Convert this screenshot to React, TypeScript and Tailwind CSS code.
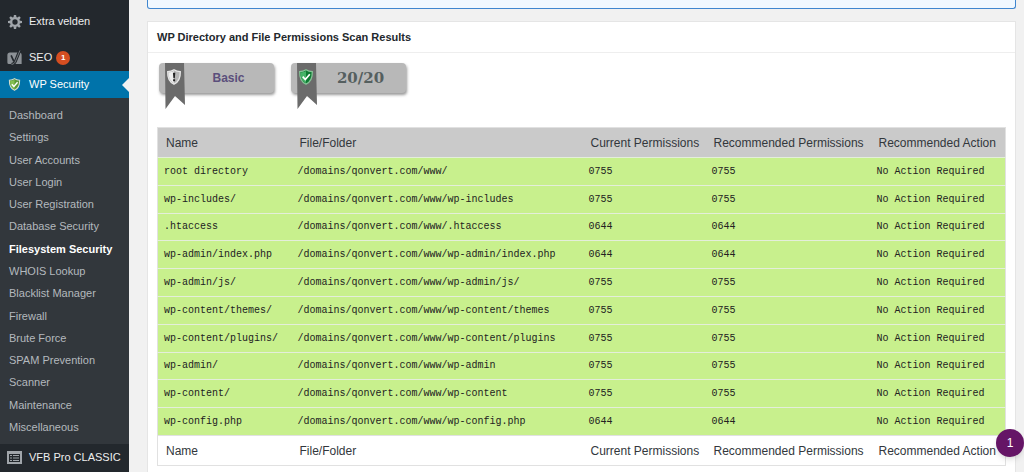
import type { ReactNode } from "react";
import clsx from "clsx";

const SUBMENU = [
  "Dashboard",
  "Settings",
  "User Accounts",
  "User Login",
  "User Registration",
  "Database Security",
  "Filesystem Security",
  "WHOIS Lookup",
  "Blacklist Manager",
  "Firewall",
  "Brute Force",
  "SPAM Prevention",
  "Scanner",
  "Maintenance",
  "Miscellaneous",
];

const COLUMNS = [
  "Name",
  "File/Folder",
  "Current Permissions",
  "Recommended Permissions",
  "Recommended Action",
];

const ROWS = [
  { name: "root directory", path: "/domains/qonvert.com/www/", perms: "0755" },
  { name: "wp-includes/", path: "/domains/qonvert.com/www/wp-includes", perms: "0755" },
  { name: ".htaccess", path: "/domains/qonvert.com/www/.htaccess", perms: "0644" },
  { name: "wp-admin/index.php", path: "/domains/qonvert.com/www/wp-admin/index.php", perms: "0644" },
  { name: "wp-admin/js/", path: "/domains/qonvert.com/www/wp-admin/js/", perms: "0755" },
  { name: "wp-content/themes/", path: "/domains/qonvert.com/www/wp-content/themes", perms: "0755" },
  { name: "wp-content/plugins/", path: "/domains/qonvert.com/www/wp-content/plugins", perms: "0755" },
  { name: "wp-admin/", path: "/domains/qonvert.com/www/wp-admin", perms: "0755" },
  { name: "wp-content/", path: "/domains/qonvert.com/www/wp-content", perms: "0755" },
  { name: "wp-config.php", path: "/domains/qonvert.com/www/wp-config.php", perms: "0644" },
];

const TEETH = [0, 45, 90, 135, 180, 225, 270, 315];

function GearIcon() {
  return (
    <svg width="14" height="14" viewBox="0 0 20 20" aria-hidden="true">
      <circle cx="10" cy="10" r="5.5" fill="none" stroke="#a0a5aa" strokeWidth="3.4" />
      {TEETH.map((angle) => (
        <path key={angle} d="M8.400 0h3.200l.6 4H7.800z" fill="#a0a5aa" transform={`rotate(${angle} 10 10)`} />
      ))}
    </svg>
  );
}

function YoastIcon() {
  return (
    <svg width="15" height="16" viewBox="0 0 20 21" aria-hidden="true">
      <path d="M4 3h12.500a3 3 0 0 1 3 3v12.500H2.500a2 2 0 0 1-2-2V6.500A3.500 3.500 0 0 1 4 3z" fill="#8c9196" />
      <path d="M17.200 0L11.400 14.500c-1 2.600-2.300 4.300-5.400 4.600" stroke="#23282d" strokeWidth="4" fill="none" />
      <path d="M5.500 7l3.600 8" stroke="#23282d" strokeWidth="2.200" fill="none" />
      <path d="M17.200 .5L11.400 14.500c-1 2.600-2.300 4.300-5.400 4.600" stroke="#8c9196" strokeWidth="1" fill="none" />
    </svg>
  );
}

function ShieldIcon({ kind, size }: { kind: "menu" | "ok" | "warn"; size: number }) {
  const light = { menu: "#85bf50", ok: "#45b368", warn: "#eeeeee" }[kind];
  const dark = { menu: "#5a9a35", ok: "#0d7a32", warn: "#b5b5b5" }[kind];
  const rim = { menu: "#d3dccd", ok: "#86c296", warn: "#e6e6e6" }[kind];

  return (
    <svg width={size} height={size} viewBox="0 0 16 16" aria-hidden="true">
      <path
        d="M8 .8c2 1.400 4.200 1.900 6.300 1.900.2 5.800-1.400 10.200-6.300 12.500C3.100 12.900 1.500 8.500 1.700 2.700 3.800 2.700 6 2.200 8 .8z"
        fill={dark}
        stroke={rim}
        strokeWidth="1.300"
      />
      <path d="M8 2v12C4.200 12 2.600 8.500 2.600 3.500 4.500 3.400 6.500 3 8 2z" fill={light} />
      {kind === "warn" ? (
        <path d="M6.900 3.800h2.400l-.5 5.400H7.400zM7.100 10.300h2v2h-2z" fill="#222" />
      ) : (
        <path d="M4.700 7.700l2.600 2.800 4.500-5.300" stroke="#fff" strokeWidth="1.700" fill="none" />
      )}
    </svg>
  );
}

function FormIcon() {
  return (
    <svg width="15" height="13" viewBox="0 0 15 13" aria-hidden="true">
      <path d="M0 0h15v13H0z" fill="#a0a5aa" />
      <path d="M2 3h11v8H2z" fill="#23282d" />
      <path d="M3 4h2v1H3zM6 4h6v1H6zM3 6.500h2v1H3zM6 6.500h6v1H6zM3 9h2v1H3zM6 9h6v1H6z" fill="#a0a5aa" />
    </svg>
  );
}

function MenuItem({
  icon,
  active,
  children,
}: {
  icon?: ReactNode;
  active?: boolean;
  children: ReactNode;
}) {
  return (
    <a
      href="#"
      className={clsx(
        "relative flex h-[27px] items-center whitespace-nowrap text-[11px]",
        active ? "bg-[#0073aa] text-white" : "text-[#eeeeee]",
      )}
    >
      <span className="flex w-[29px] shrink-0 justify-center">{icon}</span>
      {children}
      {active && (
        <span className="absolute top-1/2 right-0 -translate-y-1/2 border-y-[7px] border-r-[7px] border-y-transparent border-r-[#f1f1f1]" />
      )}
    </a>
  );
}

function Sidebar() {
  return (
    <nav className="w-[129px] shrink-0 bg-[#23282d]">
      <div className="-mt-[19px]">
        <MenuItem>Instellingen</MenuItem>
        <MenuItem icon={<GearIcon />}>Extra velden</MenuItem>
      </div>
      <div className="mt-[9px]">
        <MenuItem icon={<YoastIcon />}>
          SEO
          <span className="ml-1 flex size-[14px] items-center justify-center rounded-full bg-[#d54e21] text-[8px] font-bold text-white">
            1
          </span>
        </MenuItem>
        <MenuItem icon={<ShieldIcon kind="menu" size={13} />} active>
          WP Security
        </MenuItem>
      </div>
      <ul className="flex h-[346px] flex-col bg-[#32373c] py-[6px]">
        {SUBMENU.map((item) => (
          <li key={item} className="flex flex-1 items-center">
            <a
              href="#"
              className={clsx(
                "px-[9px] text-[11px] leading-4 whitespace-nowrap",
                item === "Filesystem Security" ? "font-bold text-white" : "text-[#b4b9be]",
              )}
            >
              {item}
            </a>
          </li>
        ))}
      </ul>
      <MenuItem icon={<FormIcon />}>VFB Pro CLASSIC</MenuItem>
    </nav>
  );
}

function Badge({ kind, children }: { kind: "ok" | "warn"; children: ReactNode }) {
  return (
    <div className="relative flex h-[30px] w-[115px] items-center justify-center rounded-[4px] bg-[#b8b8b8] pl-6 shadow-[1px_2px_3px_#999999]">
      <svg className="absolute top-0 left-[6px]" width="20" height="46" viewBox="0 0 20 46" aria-hidden="true">
        <path d="M0 0h19l1 42-10-9L.5 46z" fill="#6b6b6b" />
      </svg>
      <span className="absolute top-[6px] left-[7px]">
        <ShieldIcon kind={kind} size={16} />
      </span>
      {children}
    </div>
  );
}

function HeadingRow({ className }: { className?: string }) {
  return (
    <tr className={className}>
      {COLUMNS.map((column) => (
        <th key={column} scope="col" className="px-2 text-left text-xs font-normal whitespace-nowrap">
          {column}
        </th>
      ))}
    </tr>
  );
}

function PermissionsTable() {
  return (
    <table className="h-[339px] w-full table-fixed border-collapse border border-[#e1e1e1] text-[#32373c]">
      <colgroup>
        <col className="w-[134px]" />
        <col />
        <col className="w-[123px]" />
        <col className="w-[165px]" />
        <col className="w-[135px]" />
      </colgroup>
      <thead>
        <HeadingRow className="h-[30px] bg-[#cacaca]" />
      </thead>
      <tbody className="font-['Liberation_Mono',monospace] text-[10px] text-[#222222]">
        {ROWS.map((row) => (
          <tr key={row.name} className="border-t border-[#e4eedb] bg-[#c8f08d]">
            <td className="px-[6px]">{row.name}</td>
            <td className="px-[6px]">{row.path}</td>
            <td className="px-[6px]">{row.perms}</td>
            <td className="px-[6px]">{row.perms}</td>
            <td className="px-[6px] whitespace-nowrap">No Action Required</td>
          </tr>
        ))}
      </tbody>
      <tfoot>
        <HeadingRow className="h-[30px] border-t border-[#e1e1e1] bg-white" />
      </tfoot>
    </table>
  );
}

export default function App() {
  return (
    <div className="relative flex h-screen overflow-hidden bg-[#f1f1f1] font-['Liberation_Sans',Arial,sans-serif]">
      <Sidebar />
      <main className="min-w-0 flex-1 pr-2 pl-[18px]">
        <div className="h-[9px] rounded-b-[3px] border border-t-0 border-[#3f86cf] bg-[#f0f8ff]" />
        <section className="mt-3 min-h-full border border-[#e5e5e5] bg-white">
          <h2 className="border-b border-[#eeeeee] px-[9px] text-[11px] leading-[30px] font-bold text-[#23282d]">
            WP Directory and File Permissions Scan Results
          </h2>
          <div className="px-[9px] pt-[10px]">
            <div className="mb-[34px] ml-[2px] flex gap-[17px]">
              <Badge kind="warn">
                <span className="text-xs font-bold text-[#5b4f7c]">Basic</span>
              </Badge>
              <Badge kind="ok">
                <span className="font-['DejaVu_Serif',serif] text-[15px] font-bold text-[#555f5f]">20/20</span>
              </Badge>
            </div>
            <PermissionsTable />
          </div>
        </section>
      </main>
      <button
        type="button"
        className="absolute right-0 bottom-[15px] flex size-7 items-center justify-center rounded-full bg-[#651566] text-xs text-white shadow-md"
      >
        1
      </button>
    </div>
  );
}
